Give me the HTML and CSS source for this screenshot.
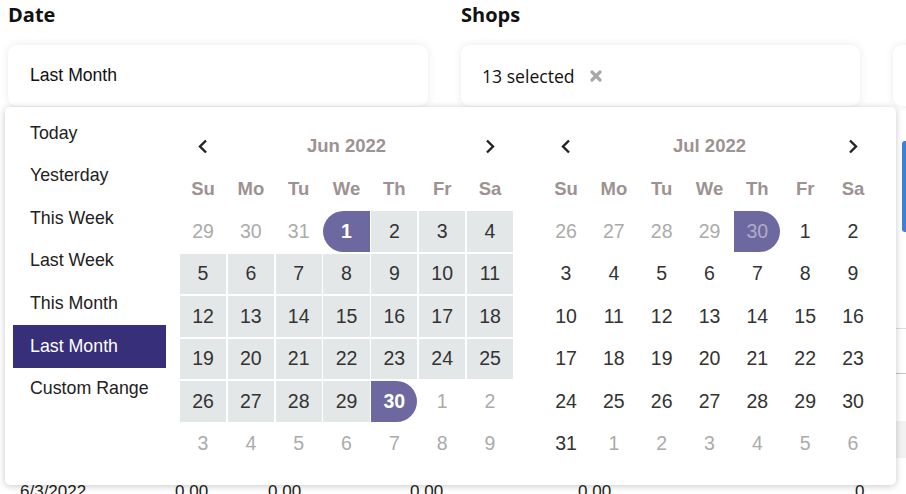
FILE: index.html
```html
<!DOCTYPE html>
<html lang="en">
<head>
    <meta charset="UTF-8">
    <meta name="viewport" content="width=device-width, initial-scale=1.0">
    <title>Sales Report</title>
    <link rel="stylesheet" href="styles.css">
</head>
<body>
<div class="page">
    <div class="filters">
        <div class="filter filter-date">
            <h2>Date</h2>
            <div class="field">Last Month</div>
        </div>
        <div class="filter filter-shops">
            <h2>Shops</h2>
            <div class="field">
                <span class="field-text">13 selected</span>
                <svg class="clear" width="12" height="12" viewBox="0 0 12 12"><path d="M2 2 L10 10 M10 2 L2 10" /></svg>
            </div>
        </div>
        <div class="filter filter-status">
            <h2>&nbsp;</h2>
            <div class="field"></div>
        </div>
    </div>

    <div class="report">
        <div class="report-actions">
            <button class="btn-export"></button>
        </div>
        <table class="report-table">
            <colgroup>
                <col style="width:155px">
                <col style="width:93px">
                <col style="width:142px">
                <col style="width:168px">
                <col style="width:277px">
                <col style="width:165px">
            </colgroup>
            <thead>
                <tr class="row-head"><th></th><th></th><th></th><th></th><th></th><th></th></tr>
            </thead>
            <tbody>
                <tr class="row-total"><td></td><td></td><td></td><td></td><td></td><td></td></tr>
                <tr class="row-space"><td colspan="6"></td></tr>
                <tr class="row-group"><td colspan="6"></td></tr>
                <tr class="row-data">
                    <td>6/3/2022</td><td>0.00</td><td>0.00</td><td>0.00</td><td>0.00</td><td class="num">0</td>
                </tr>
            </tbody>
        </table>
    </div>

    <!-- date range dropdown -->
    <div class="picker">
        <ul class="ranges">
            <li>Today</li>
            <li>Yesterday</li>
            <li>This Week</li>
            <li>Last Week</li>
            <li>This Month</li>
            <li class="active">Last Month</li>
            <li>Custom Range</li>
        </ul>

        <div class="calendar">
            <div class="nav"><svg width="10" height="15" viewBox="0 0 10 15"><polyline points="8,1.5 2,7.5 8,13.5" /></svg></div>
            <div class="month">Jun 2022</div>
            <div class="nav"><svg width="10" height="15" viewBox="0 0 10 15"><polyline points="2,1.5 8,7.5 2,13.5" /></svg></div>
            <div class="dow">Su</div><div class="dow">Mo</div><div class="dow">Tu</div><div class="dow">We</div><div class="dow">Th</div><div class="dow">Fr</div><div class="dow">Sa</div>

            <div class="day off">29</div><div class="day off">30</div><div class="day off">31</div><div class="day active start">1</div><div class="day in-range">2</div><div class="day in-range">3</div><div class="day in-range">4</div>
            <div class="day in-range">5</div><div class="day in-range">6</div><div class="day in-range">7</div><div class="day in-range">8</div><div class="day in-range">9</div><div class="day in-range">10</div><div class="day in-range">11</div>
            <div class="day in-range">12</div><div class="day in-range">13</div><div class="day in-range">14</div><div class="day in-range">15</div><div class="day in-range">16</div><div class="day in-range">17</div><div class="day in-range">18</div>
            <div class="day in-range">19</div><div class="day in-range">20</div><div class="day in-range">21</div><div class="day in-range">22</div><div class="day in-range">23</div><div class="day in-range">24</div><div class="day in-range">25</div>
            <div class="day in-range">26</div><div class="day in-range">27</div><div class="day in-range">28</div><div class="day in-range">29</div><div class="day active end">30</div><div class="day off">1</div><div class="day off">2</div>
            <div class="day off">3</div><div class="day off">4</div><div class="day off">5</div><div class="day off">6</div><div class="day off">7</div><div class="day off">8</div><div class="day off">9</div>
        </div>

        <div class="calendar">
            <div class="nav"><svg width="10" height="15" viewBox="0 0 10 15"><polyline points="8,1.5 2,7.5 8,13.5" /></svg></div>
            <div class="month">Jul 2022</div>
            <div class="nav"><svg width="10" height="15" viewBox="0 0 10 15"><polyline points="2,1.5 8,7.5 2,13.5" /></svg></div>
            <div class="dow">Su</div><div class="dow">Mo</div><div class="dow">Tu</div><div class="dow">We</div><div class="dow">Th</div><div class="dow">Fr</div><div class="dow">Sa</div>

            <div class="day off">26</div><div class="day off">27</div><div class="day off">28</div><div class="day off">29</div><div class="day off active-off end">30</div><div class="day">1</div><div class="day">2</div>
            <div class="day">3</div><div class="day">4</div><div class="day">5</div><div class="day">6</div><div class="day">7</div><div class="day">8</div><div class="day">9</div>
            <div class="day">10</div><div class="day">11</div><div class="day">12</div><div class="day">13</div><div class="day">14</div><div class="day">15</div><div class="day">16</div>
            <div class="day">17</div><div class="day">18</div><div class="day">19</div><div class="day">20</div><div class="day">21</div><div class="day">22</div><div class="day">23</div>
            <div class="day">24</div><div class="day">25</div><div class="day">26</div><div class="day">27</div><div class="day">28</div><div class="day">29</div><div class="day">30</div>
            <div class="day">31</div><div class="day off">1</div><div class="day off">2</div><div class="day off">3</div><div class="day off">4</div><div class="day off">5</div><div class="day off">6</div>
        </div>
    </div>
</div>
</body>
</html>
```

FILE: styles.css
```css
body {
    margin: 0;
    padding: 0;
    background-color: #fff;
    overflow: hidden;
    font-family: "Liberation Sans", Arial, sans-serif;
    color: #222;
}

.page {
    position: relative;
    padding: 0 8px;
    width: 1300px;
}

/* filter row */

.filters {
    display: flex;
    gap: 33px;
}

.filter-date {
    width: 420px;
}

.filter-shops {
    width: 399px;
}

.filter-status {
    width: 400px;
}

.filter h2 {
    margin: 0 0 17px;
    padding-top: 2px;
    font-family: "Open Sans", sans-serif;
    font-size: 20px;
    font-weight: 700;
    line-height: 26px;
    color: #111;
}

.field {
    display: flex;
    align-items: center;
    height: 61px;
    padding: 0 21px;
    box-sizing: border-box;
    background-color: #fff;
    border-radius: 9px;
    box-shadow: 0 0 9px rgba(0, 0, 0, 0.09);
    font-size: 17.6px;
    color: #111;
}

.filter-date .field {
    padding-left: 22px;
}

.filter-shops .field {
    font-family: "Open Sans", sans-serif;
    font-size: 17.6px;
}

.clear {
    margin-left: 15px;
    stroke: #a8a8a8;
    stroke-width: 3.2;
    stroke-linecap: round;
}

/* report behind the dropdown */

.report {
    width: 1000px;
    margin-top: 35px;
}

.report-actions {
    display: flex;
    justify-content: flex-end;
}

.btn-export {
    width: 106px;
    height: 91px;
    border: none;
    border-radius: 3px;
    background-color: #3f7fd6;
}

.report-table {
    width: 1000px;
    table-layout: fixed;
    border-collapse: collapse;
    font-size: 17px;
}

.report-table td,
.report-table th {
    padding: 0 12px;
}

.row-head {
    height: 96px;
    border-bottom: 1px solid #dcdcdc;
}

.row-total {
    height: 45px;
    border-bottom: 1px solid #c4c4c4;
}

.row-space {
    height: 48px;
}

.row-group {
    height: 37px;
    background-color: #f2f2f2;
}

.row-data td {
    padding-top: 24px;
    vertical-align: top;
    color: #222;
}

/* date range picker */

.picker {
    position: absolute;
    left: 5px;
    top: 107px;
    width: 891px;
    height: 378px;
    box-sizing: border-box;
    display: flex;
    align-items: flex-start;
    padding: 0 20px 0 8px;
    background-color: #fff;
    border-radius: 5px;
    box-shadow: 0 1px 7px rgba(0, 0, 0, 0.22);
}

.ranges {
    list-style: none;
    margin: 4.7px 14px 0 0;
    padding: 0;
    width: 153px;
}

.ranges li {
    display: flex;
    align-items: center;
    height: 42.67px;
    padding-left: 17px;
    font-size: 17.8px;
    color: #222;
}

.ranges li.active {
    background-color: #372f79;
    color: #fff;
}

.calendar {
    display: grid;
    grid-template-columns: repeat(7, 1fr);
    grid-auto-rows: 40.5px;
    gap: 2px 1.8px;
    width: 333px;
    margin-top: 19px;
}

.calendar + .calendar {
    margin-left: 30px;
}

.nav {
    display: flex;
    align-items: center;
    justify-content: center;
}

.nav svg {
    fill: none;
    stroke: #222;
    stroke-width: 2.4;
}

.month {
    grid-column: span 5;
    display: flex;
    align-items: center;
    justify-content: center;
    font-size: 18.5px;
    font-weight: 700;
    color: #9d9292;
}

.dow {
    display: flex;
    align-items: center;
    justify-content: center;
    font-size: 18.5px;
    font-weight: 700;
    color: #9d9292;
}

.day {
    display: flex;
    align-items: center;
    justify-content: center;
    font-size: 19.5px;
    color: #333;
}

.day.off {
    color: #ababab;
}

.day.in-range {
    background-color: #e4e7e8;
}

.day.active {
    background-color: #6e68a0;
    color: #fff;
    font-weight: 700;
}

.day.active-off {
    background-color: #6e68a0;
    color: #b0abc8;
}

.day.start {
    border-radius: 21px 0 0 21px;
}

.day.end {
    border-radius: 0 21px 21px 0;
}
```
